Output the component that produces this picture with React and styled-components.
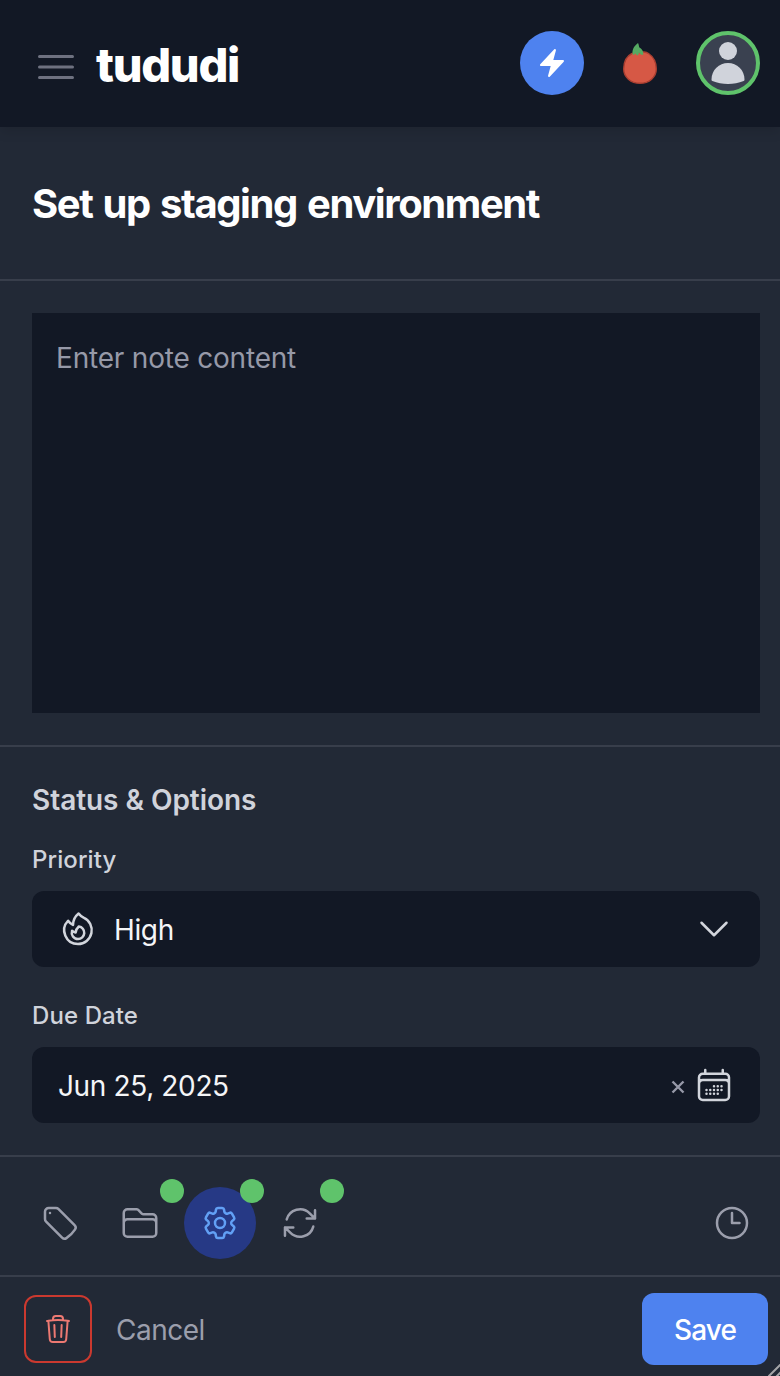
import React from 'react';
import styled, { createGlobalStyle } from 'styled-components';
import {
  HiBolt, HiOutlineFire, HiOutlineChevronDown, HiOutlineCalendarDays,
  HiOutlineTag, HiOutlineFolder, HiOutlineCog6Tooth, HiOutlineArrowPath,
  HiOutlineClock, HiOutlineTrash, HiOutlineBars3,
} from 'react-icons/hi2';

const GlobalStyle = createGlobalStyle`
  *, *::before, *::after { box-sizing: border-box; }
  body {
    margin: 0;
    background: #222936;
    font-family: Inter, "Liberation Sans", sans-serif;
    overflow: hidden;
  }
  button { font-family: inherit; border: 0; padding: 0; background: none; }
  svg { display: block; flex-shrink: 0; }
`;

const Page = styled.div`
  display: flex;
  flex-direction: column;
  width: 780px;
  height: 1376px;
  background: #222936;
  position: relative;
`;

const Header = styled.header`
  display: flex;
  align-items: center;
  height: 127px;
  padding: 0 20px 1px 32px;
  background: #121825;
  box-shadow: 0 4px 12px rgba(0, 0, 0, 0.12);
  flex-shrink: 0;
`;

const MenuButton = styled.button`
  color: #6e7180;
  padding-top: 8px;
`;

const Brand = styled.div`
  margin-left: 16px;
  padding-top: 3px;
  font-size: 47px;
  line-height: 56px;
  font-weight: 800;
  letter-spacing: -1.3px;
  color: #fff;
`;

const HeaderActions = styled.div`
  display: flex;
  align-items: center;
  margin-left: auto;
  gap: 36px;
`;

const RoundButton = styled.button`
  display: flex;
  align-items: center;
  justify-content: center;
  width: 64px;
  height: 64px;
  border-radius: 50%;
  background: ${p => p.$bg};
  border: ${p => (p.$ring ? `4px solid ${p.$ring}` : '0')};
  color: #fff;
`;

const TitleSection = styled.section`
  height: 154px;
  padding: 49px 32px 0;
  border-bottom: 2px solid #383e4b;
  flex-shrink: 0;
`;

const Title = styled.h1`
  margin: 0;
  font-size: 40px;
  line-height: 56px;
  font-weight: 700;
  letter-spacing: -1.4px;
  word-spacing: 2px;
  color: #fff;
  white-space: nowrap;
`;

const NoteSection = styled.section`
  padding: 32px 20px 32px 32px;
  height: 466px;
  border-bottom: 2px solid #383e4b;
  flex-shrink: 0;
`;

const Note = styled.div`
  height: 400px;
  padding: 24px;
  background: #121825;
  color: #9699a8;
  font-size: 28px;
  line-height: 42px;
  letter-spacing: -0.2px;
`;

const Options = styled.section`
  height: 410px;
  padding: 33px 20px 0 32px;
  border-bottom: 2px solid #383e4b;
  flex-shrink: 0;
`;

const SectionTitle = styled.h2`
  margin: 0;
  font-size: 28px;
  line-height: 40px;
  font-weight: 600;
  letter-spacing: -0.05px;
  color: #d0d3db;
`;

const Label = styled.div`
  margin-top: ${p => p.$top}px;
  margin-bottom: 15px;
  font-size: 24px;
  line-height: 32px;
  font-weight: 500;
  letter-spacing: 0.1px;
  color: #d0d3db;
`;

const Field = styled.div`
  display: flex;
  align-items: center;
  height: 76px;
  padding: 0 26px;
  border-radius: 12px;
  background: #121825;
  color: #d2d5dc;
`;

const FieldText = styled.span`
  margin-left: ${p => p.$left || 0}px;
  margin-right: auto;
  padding-top: 2px;
  font-size: 28px;
  line-height: 40px;
  letter-spacing: -0.36px;
  color: #f4f5f7;
`;

const Clear = styled.button`
  margin-right: 9px;
  padding-top: 3px;
  color: #9699a8;
`;

const Toolbar = styled.div`
  display: flex;
  align-items: center;
  height: 120px;
  padding: 14px 12px 0 24px;
  gap: 8px;
  border-bottom: 2px solid #383e4b;
  flex-shrink: 0;
`;

const ToolButton = styled.button`
  position: relative;
  display: flex;
  align-items: center;
  justify-content: center;
  width: 72px;
  height: 72px;
  border-radius: 50%;
  color: ${p => (p.$active ? '#62a0f5' : '#9b9eac')};
  background: ${p => (p.$active ? '#263985' : 'transparent')};
  margin-left: ${p => (p.$end ? 'auto' : '0')};
`;

const Dot = styled.span`
  position: absolute;
  top: -8px;
  right: -8px;
  width: 24px;
  height: 24px;
  border-radius: 50%;
  background: #5fc36b;
`;

const Footer = styled.footer`
  display: flex;
  align-items: center;
  flex: 1;
  padding: 5px 12px 0 24px;
`;

const DeleteButton = styled.button`
  display: flex;
  align-items: center;
  justify-content: center;
  width: 68px;
  height: 68px;
  border: 2px solid #cb392f;
  border-radius: 12px;
  color: #ed7972;
`;

const CancelButton = styled.button`
  margin-left: 24px;
  padding-top: 1px;
  font-size: 28px;
  line-height: 40px;
  letter-spacing: -0.5px;
  color: #9b9eac;
`;

const SaveButton = styled.button`
  width: 126px;
  height: 72px;
  margin-left: auto;
  padding-top: 2px;
  border-radius: 12px;
  background: #4e82ef;
  color: #fff;
  font-size: 28px;
  line-height: 40px;
  font-weight: 500;
  letter-spacing: -0.9px;
`;

const ResizeGrip = styled.svg`
  position: absolute;
  right: 0;
  bottom: 0;
`;

const Tomato = () => (
  <svg width="40" height="44" viewBox="0 0 40 44">
    <path d="M12 12.500C15 10.600 19 11 20 11.500c2-1 6-.7 8.500 1C33 15.500 36.300 21 36.300 28c0 8-7 14.300-16.300 14.300S3.700 36 3.700 28C3.700 21 7 15 12 12.500Z" fill="#d65845" stroke="#aa3f31" strokeWidth="1.400" />
    <path d="M18 2c.7 1.600 1 2.700 1.200 4.300 3 1.700 4.500 4.500 4 7.500-1.800.3-3-.4-4.200-2.300-.3 1.500-.7 2.500-1.500 3-1-.4-1.700-1.200-2-2.200-.7 1-1.500 1.500-2.600 1.500C11.400 9.500 14.100 4.800 18 2Z" fill="#55aa62" />
  </svg>
);

const Avatar = () => (
  <svg width="56" height="56" viewBox="0 0 56 56" fill="#d0d3db">
    <circle cx="28" cy="16" r="9" />
    <path d="M11.500 44.500C11.500 35 19 28 28 28s16.500 7 16.500 16.500c0 .8-.2 1.200-.9 1.500C34 50 22 50 12.400 46c-.7-.3-.9-.7-.9-1.500Z" />
  </svg>
);

export default function App() {
  return (
    <>
      <GlobalStyle />
      <Page>
        <Header>
          <MenuButton aria-label="Menu"><HiOutlineBars3 size={48} /></MenuButton>
          <Brand>tududi</Brand>
          <HeaderActions>
            <RoundButton $bg="#4e82ef" aria-label="Quick add"><HiBolt size={32} /></RoundButton>
            <Tomato />
            <RoundButton $bg="#3a4150" $ring="#5fc36b" aria-label="Profile"><Avatar /></RoundButton>
          </HeaderActions>
        </Header>
        <TitleSection><Title>Set up staging environment</Title></TitleSection>
        <NoteSection><Note>Enter note content</Note></NoteSection>
        <Options>
          <SectionTitle>Status &amp; Options</SectionTitle>
          <Label $top={24}>Priority</Label>
          <Field>
            <HiOutlineFire size={40} />
            <FieldText $left={16}>High</FieldText>
            <HiOutlineChevronDown size={40} />
          </Field>
          <Label $top={33}>Due Date</Label>
          <Field>
            <FieldText>Jun 25, 2025</FieldText>
            <Clear aria-label="Clear date">
              <svg width="14" height="14" viewBox="0 0 14 14" stroke="currentColor" strokeWidth="2.400"><path d="M1.500 1.500l11 11M12.500 1.500l-11 11" /></svg>
            </Clear>
            <HiOutlineCalendarDays size={40} />
          </Field>
        </Options>
        <Toolbar>
          <ToolButton aria-label="Tags"><HiOutlineTag size={40} /></ToolButton>
          <ToolButton aria-label="Project"><HiOutlineFolder size={40} /><Dot /></ToolButton>
          <ToolButton $active aria-label="Options"><HiOutlineCog6Tooth size={40} /><Dot /></ToolButton>
          <ToolButton aria-label="Recurrence"><HiOutlineArrowPath size={40} /><Dot /></ToolButton>
          <ToolButton $end aria-label="History"><HiOutlineClock size={40} /></ToolButton>
        </Toolbar>
        <Footer>
          <DeleteButton aria-label="Delete"><HiOutlineTrash size={32} /></DeleteButton>
          <CancelButton>Cancel</CancelButton>
          <SaveButton>Save</SaveButton>
        </Footer>
        <ResizeGrip width="12" height="12" viewBox="0 0 12 12" stroke="#a5a5a8" strokeWidth="2"><path d="M0 13L13 0M8 13l5-5" /></ResizeGrip>
      </Page>
    </>
  );
}
